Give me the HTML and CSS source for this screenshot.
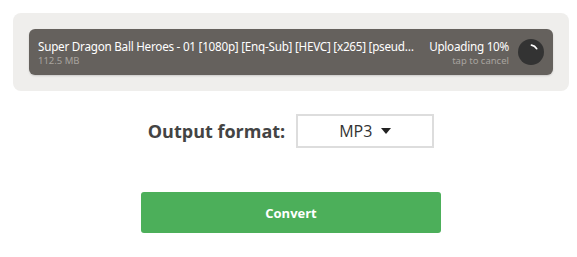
FILE: index.html
```html
<!doctype html>
<html lang="en">

<head>
    <meta charset="UTF-8">
    <meta name="viewport" content="width=device-width, initial-scale=1.0">
    <title>Convert</title>
    <link rel="stylesheet" href="styles.css">
</head>

<body>
    <div class="page">
        <div class="upload-box">
            <div class="file-bar">
                <div class="file-info">
                    <div class="file-name">Super Dragon Ball Heroes - 01 [1080p] [Enq-Sub] [HEVC] [x265] [pseudo] [English Subtitles].mkv</div>
                    <div class="file-size">112.5 MB</div>
                </div>
                <div class="file-status">
                    <div class="status-text">Uploading 10%</div>
                    <div class="status-hint">tap to cancel</div>
                </div>
                <svg class="spinner" width="26" height="26" viewBox="0 0 26 26">
                    <circle cx="13" cy="13" r="13" fill="#333"></circle>
                    <path d="M13.5 6.2 A7 7 0 0 1 18.6 9.6" stroke="#fff" stroke-width="1.8" fill="none" stroke-linecap="round"></path>
                </svg>
            </div>
        </div>

        <div class="format-row">
            <span class="format-label">Output format:</span>
            <div class="format-select">
                <span>MP3</span>
                <span class="caret"></span>
            </div>
        </div>

        <button class="convert-btn">Convert</button>
    </div>
</body>

</html>
```

FILE: styles.css
```css
* {
    box-sizing: border-box;
    font-family: "Open Sans", sans-serif;
}

body {
    margin: 0;
    background: #fff;
}

.page {
    padding: 13px 8px 0 13px;
    display: flex;
    flex-direction: column;
    align-items: center;
}

.upload-box {
    width: 100%;
    background-color: #efeeec;
    border-radius: 8px;
    padding: 16px;
}

.file-bar {
    display: flex;
    align-items: center;
    height: 46px;
    background-color: #65615d;
    border-radius: 6px;
    padding: 0 9px 0 9px;
    box-shadow: 0 1px 2px rgba(0, 0, 0, 0.15);
}

.file-info {
    flex: 1;
    min-width: 0;
    margin-right: 13px;
}

.file-name,
.status-text {
    color: #fff;
    font-family: "Noto Sans", sans-serif;
    font-size: 11.7px;
    letter-spacing: -0.25px;
    white-space: nowrap;
    line-height: 16px;
}

.file-name {
    overflow: hidden;
    text-overflow: ellipsis;
}

.file-size,
.status-hint {
    color: #a8a49f;
    font-family: "Noto Sans", sans-serif;
    font-size: 9.5px;
    line-height: 13px;
    white-space: nowrap;
}

.file-status {
    text-align: right;
    margin-right: 9px;
}

.spinner {
    flex-shrink: 0;
}

.format-row {
    display: flex;
    align-items: center;
    margin-top: 23px;
}

.format-label {
    font-size: 18px;
    font-weight: 700;
    color: #444;
    margin-right: 11px;
}

.format-select {
    width: 138px;
    height: 34px;
    border: 2px solid #ddd;
    display: flex;
    align-items: center;
    justify-content: center;
    font-size: 16px;
    color: #333;
}

.caret {
    width: 0;
    height: 0;
    border-left: 5px solid transparent;
    border-right: 5px solid transparent;
    border-top: 6px solid #222;
    margin-left: 9px;
}

.convert-btn {
    margin-top: 44px;
    width: 300px;
    height: 41px;
    border: none;
    border-radius: 3px;
    background-color: #4caf5a;
    color: #fff;
    font-size: 13px;
    font-weight: 700;
    cursor: pointer;
}
```
